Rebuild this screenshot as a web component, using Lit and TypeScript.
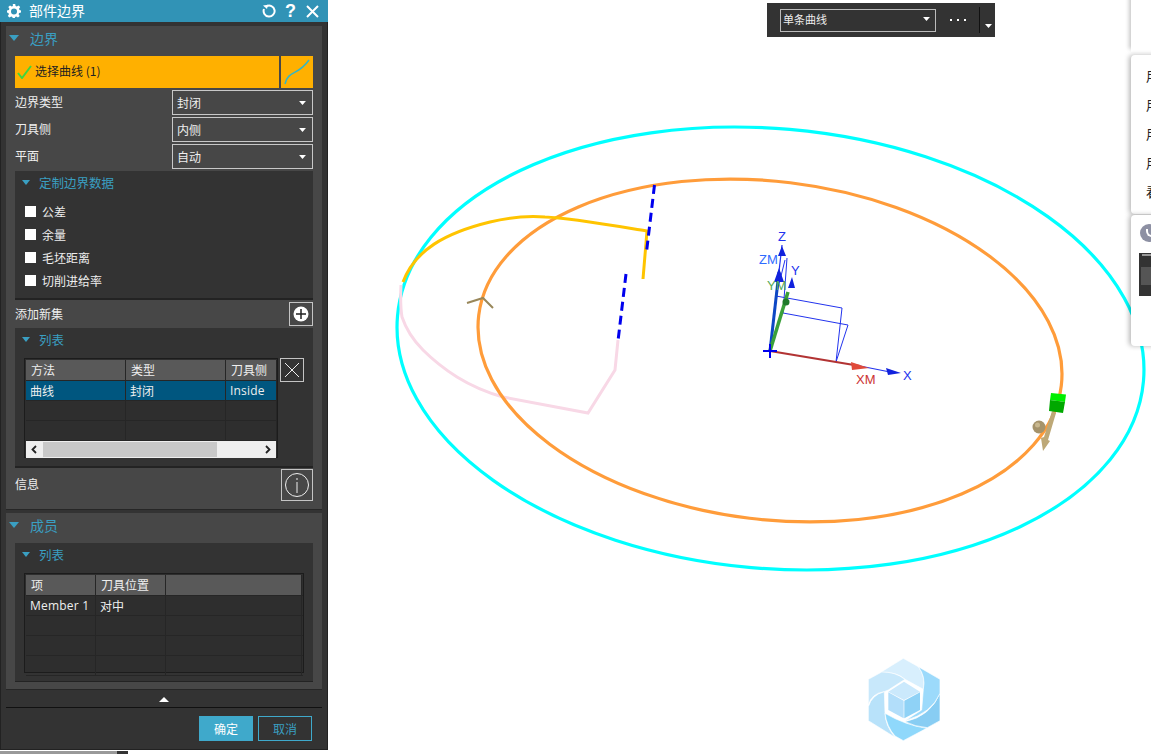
import { LitElement, html, css, svg } from "lit";
import { customElement } from "lit/decorators.js";

const caret = html`<svg class="caret" viewBox="0 0 12 7"><path d="M0 0H12L6 7Z" fill="#fff"/></svg>`;
const tri = (cls: string) => html`<span class=${"tri " + cls}></span>`;

const scene = svg`
  <ellipse cx="770.5" cy="348.5" rx="374.4" ry="219.9" transform="rotate(5 770.5 348.5)" fill="none" stroke="#00ffff" stroke-width="3.2"/>
  <path d="M401 285Q400 305 402 317Q408 335 423 350Q438 365 457 377Q478 390 503 397L588 413L615 370L618 340" fill="none" stroke="#f8d8e6" stroke-width="3"/>
  <ellipse cx="770" cy="350.5" rx="293.4" ry="169" transform="rotate(6.9 770 350.5)" fill="none" stroke="#ff9c3a" stroke-width="3.2"/>
  <path d="M403 282C415 250 445 233 490 222C510 217 530 216 545 217C570 218 610 225 647 231L643 279" fill="none" stroke="#ffc400" stroke-width="3"/>
  <path d="M654.500 185L646.500 252M626 274L618 341" fill="none" stroke="#0000ee" stroke-width="3" stroke-dasharray="9 5"/>
  <polyline points="467,303 483,298 493,308" fill="none" stroke="#99875a" stroke-width="2"/>
  <g fill="none" stroke="#2233ee" stroke-width="1">
    <path d="M776 296L842 308L836 362M783 313L848 325L836 362M785 260L776 296M787 258L783 313"/>
  </g>
  <path d="M770 351L782 245" stroke="#2233ee" stroke-width="1.200"/>
  <path d="M770 351L779 272" stroke="#0d47c4" stroke-width="3"/>
  <path d="M770 351L788 292" stroke="#3aa03a" stroke-width="3.500"/>
  <path d="M770 351L860 366" stroke="#b23333" stroke-width="2"/>
  <path d="M860 366L890 372" stroke="#2233ee" stroke-width="1.200"/>
  <path d="M782 246L778 256H786ZM779 268L774 282H784ZM792 277L788 288H795ZM901 373L886 368L888 375Z" fill="#1122dd"/>
  <path d="M869 368L851 362L852 370Z" fill="#e04a3a"/>
  <circle cx="786" cy="302" r="3.500" fill="#1f7a2a"/>
  <path d="M763 351H777M770 344V358" stroke="#0000ee" stroke-width="2"/>
  <g font-family="'Liberation Sans',sans-serif" font-size="13">
    <text x="778" y="241" fill="#2233ee">Z</text>
    <text x="759" y="264" fill="#2f6bff">ZM</text>
    <text x="791" y="275" fill="#2233ee">Y</text>
    <text x="767" y="290" fill="#55aa55">YM</text>
    <text x="856" y="384" fill="#cc3333">XM</text>
    <text x="903" y="380" fill="#2233ee">X</text>
  </g>
  <path d="M1052 411L1056 413L1048 440L1050 441L1043 451L1041 438L1044 437Z" fill="#bda877"/>
  <circle cx="1039" cy="427" r="6.500" fill="#a5936b"/>
  <circle cx="1037.500" cy="425" r="2.500" fill="#c9b88f"/>
  <path d="M1051 393L1066 394.500L1065 402L1050 400Z" fill="#00ee00"/>
  <path d="M1050 400L1065 402L1063 413L1049 411Z" fill="#00a800"/>
  <g transform="translate(850 650) scale(0.3333)" stroke="#fff" stroke-width="2">
    <path d="M95 65L160 25L205 50Q228 80 220 118L165 88Q140 65 95 68Z" fill="#d8effd"/>
    <path d="M55 88L95 66Q135 65 165 88L115 120L103 125Q65 130 55 165Z" fill="#c8e8fb"/>
    <path d="M55 170Q65 135 103 125L105 188Q105 225 135 262L55 212Z" fill="#b8e2fa"/>
    <path d="M105 190Q165 225 230 235L160 272L135 258Q110 230 105 190Z" fill="#8fd8fb"/>
    <path d="M165 215Q240 200 270 130V212L232 233Q195 230 165 215Z" fill="#88cdf3"/>
    <path d="M205 50L270 88V130Q245 190 165 212L215 180L220 118Q228 80 205 50Z" fill="#9cdafb"/>
    <path d="M115 125L162 95L210 125L162 150Z" fill="#cbe9fc" stroke="none"/>
    <path d="M115 127L161 152V205L115 180Z" fill="#b2defa" stroke="none"/>
    <path d="M163 152L210 127V180L163 205Z" fill="#8fd2f6" stroke="none"/>
  </g>
`;

@customElement("app-root")
export class AppRoot extends LitElement {
  static styles = css`
    :host {
      display: flex;
      width: 1151px;
      height: 754px;
      position: relative;
      overflow: hidden;
      background: #fff;
      font-family: "Noto Sans CJK SC", "Noto Sans", sans-serif;
      font-size: 12px;
      color: #eee;
      --accent: #3a9fc2;
    }
    .left { width: 328px; flex: none; display: flex; flex-direction: column; }
    .panel {
      height: 751px; box-sizing: border-box; background: #333;
      border-left: 1px solid #222; border-right: 1px solid #222; border-bottom: 1px solid #222;
      display: flex; flex-direction: column;
    }
    .strip { display: flex; height: 3px; width: 128px; margin-top: 1px; }
    .strip i { flex: 1; background: #999; }
    .strip b { width: 11px; background: #333; }
    .title {
      height: 22px; margin: 0 -1px; background: #3193b6; display: flex; align-items: center;
      padding: 0 9px 0 7px; color: #fff; font-size: 14px; flex: none;
    }
    .title .name { flex: 1; margin: -2px 0 0 8px; }
    .title svg { display: block; }
    .title .q { font: bold 18px "Liberation Sans", sans-serif; margin: 0 10px 0 9px; line-height: 22px; }
    .sec { background: #474747; margin: 4px 5px 0; padding: 0 9px; border-bottom: 1px solid #262626; }
    .sec.one { height: 484px; box-sizing: border-box; display: flex; flex-direction: column; }
    .sec.two { height: 177px; box-sizing: border-box; margin-top: 3px; }
    .head { display: flex; align-items: center; color: var(--accent); font-size: 14px; margin: 0 0 6px -6px; height: 24px; }
    .tri { width: 0; height: 0; border-style: solid; border-color: var(--accent) transparent transparent; }
    .tri.big { border-width: 6px 5px 0; margin-right: 11px; }
    .tri.small { border-width: 5px 4.500px 0; margin: 0 9px 0 7px; }
    .sel { display: flex; gap: 2px; height: 32px; flex: none; }
    .sel .a { flex: 1; background: #ffb000; color: #222; display: flex; align-items: center; padding-left: 2px; gap: 3px; }
    .sel .a span { margin-top: -3px; }
    .sel .b { width: 32px; background: #ffb000; }
    .row { display: flex; align-items: center; height: 25px; margin-top: 2px; flex: none; font-size: 12px; }
    .row .lbl { flex: 1; margin-top: -2px; }
    .dd {
      width: 141px; height: 25px; box-sizing: border-box; border: 1px solid #c8c8c8; display: flex;
      align-items: center; justify-content: space-between; padding: 0 6px 0 4px; background: #474747; flex: none;
    }
    .caret { width: 7px; height: 4px; display: block; }
    .group { background: #333; flex: none; }
    .g1 { height: 127px; margin-top: 2px; border-bottom: 2px solid #232323; }
    .subhead { display: flex; align-items: center; color: var(--accent); font-size: 12.500px; height: 22px; }
    .checks { display: flex; flex-direction: column; gap: 3px; padding: 8px 0 0 10px; }
    .check { display: flex; align-items: center; gap: 6px; height: 20px; }
    .box { width: 11px; height: 11px; background: #fff; }
    .addrow { display: flex; align-items: center; justify-content: space-between; height: 28px; flex: none; }
    .addrow > span { margin-top: -2px; }
    .iconbtn { box-sizing: border-box; border: 1px solid #c4c4c4; display: flex; align-items: center; justify-content: center; flex: none; }
    .add { width: 24px; height: 24px; }
    .g2 { height: 138px; border-bottom: 2px solid #232323; }
    .tablewrap { display: flex; gap: 2px; padding: 8px 0 0 9px; align-items: flex-start; }
    .tbl { border: 1px solid #1c1c1c; box-sizing: border-box; background: #2e2e2e; padding: 1px 0 1px 1px; flex: none; }
    .t1 { width: 254px; height: 100px; }
    .t2 { width: 280px; height: 100px; }
    .tr { display: grid; height: 20px; border-bottom: 1px solid #262626; box-sizing: border-box; }
    .t1 .tr { grid-template-columns: 100px 100px 51px; }
    .t2 .tr { grid-template-columns: 70px 70px 136px; }
    .tr > span { border-right: 1px solid #262626; display: flex; align-items: center; padding-left: 4px; white-space: nowrap; min-width: 0; line-height: 1; }
    .tr.hd { height: 21px; }
    .tr.hd > span { background: #595959; padding-left: 5px; }
    .tr.on > span { background: #00567f; }
    .latin { font-family: "Open Sans", "Noto Sans", sans-serif; letter-spacing: 0.200px; }
    .sb { height: 17px; background: #eee; display: flex; align-items: center; justify-content: space-between; padding: 0 5px; margin-right: 1px; position: relative; }
    .sb .thumb { position: absolute; left: 17px; width: 174px; top: 1px; bottom: 1px; background: #c8c8c8; }
    .sb svg { width: 6px; height: 9px; display: block; position: relative; }
    .del { width: 24px; height: 24px; }
    .inforow { display: flex; align-items: flex-start; justify-content: space-between; height: 41px; padding-top: 1px; box-sizing: border-box; flex: none; }
    .inforow > span { margin-top: 6px; }
    .info { width: 32px; height: 32px; }
    .g3 { height: 138px; border-bottom: 1px solid #232323; }
    .more { height: 17px; box-sizing: border-box; display: flex; align-items: center; justify-content: center; margin: 1px 5px 0; border-bottom: 1px solid #111; flex: none; }
    .more i { border-style: solid; border-width: 0 5px 5px; border-color: transparent transparent #fff; width: 0; height: 0; }
    .foot { display: flex; justify-content: flex-end; gap: 5px; padding: 8px 15px 0 0; }
    .btn { width: 54px; height: 25px; box-sizing: border-box; display: flex; align-items: center; justify-content: center; padding-bottom: 1px; }
    .ok { background: #3fa9cb; color: #fff; }
    .cancel { border: 1px solid #3fa9cb; color: #3a9fc2; }
    .canvas { flex: 1; position: relative; }
    .canvas > svg { position: absolute; left: 0; top: 0; width: 823px; height: 754px; }
    .tool {
      position: absolute; left: 439px; top: 3px; width: 228px; height: 34px; background: #333; box-sizing: border-box;
      display: flex; align-items: center; padding-left: 13px;
    }
    .tool .dd { width: 156px; height: 23px; background: #333; font-size: 11px; padding: 0 5px 2px 2px; border-color: #bbb; }
    .dots { display: flex; gap: 5px; width: 43px; justify-content: center; flex: none; }
    .dots i { width: 2px; height: 2px; background: #fff; }
    .tool .sep { width: 1px; height: 26px; background: #111; }
    .tool .mini { margin: 12px 0 0 5px; width: 7px; height: 4px; }
    .side { position: absolute; left: 803px; width: 30px; background: #fff; border-radius: 4px 0 0 4px; box-shadow: -2px 0 5px rgba(0, 0, 0, 0.28); overflow: hidden; color: #222; box-sizing: border-box; }
    .s1 { top: -6px; height: 58px; border-radius: 0; box-shadow: -2px -3px 4px rgba(0, 0, 0, 0.22); }
    .s2 { top: 55px; height: 159px; padding: 11px 0 0 15px; display: flex; flex-direction: column; gap: 9px; font-size: 13px; white-space: nowrap; }
    .s2 span { height: 20px; line-height: 20px; }
    .s3 { top: 215px; height: 131px; }
    .s3 .dot { position: absolute; left: 9px; top: 9px; width: 18px; height: 18px; border-radius: 50%; background: #8d90a3; }
    .s3 .dot::after { content: ""; position: absolute; left: 6px; top: 5px; width: 8px; height: 6px; border-left: 2px solid #fff; border-bottom: 2px solid #fff; border-radius: 0 0 0 6px; }
    .s3 .thumb { position: absolute; left: 8px; top: 38px; width: 22px; height: 43px; background: #333; }
    .s3 .thumb::before { content: ""; position: absolute; left: 3px; top: 1px; right: 0; height: 2px; background: #999; }
    .s3 .thumb::after { content: ""; position: absolute; left: 2px; top: 14px; width: 10px; height: 18px; background: #555; }
  `;

  private cell(items: unknown[], cls = "") {
    return html`<div class=${"tr " + cls}>${items.map((i) => html`<span>${i}</span>`)}</div>`;
  }

  render() {
    return html`
      <div class="left">
        <div class="panel">
          <div class="title">
            <svg width="14" height="14" viewBox="0 0 14 14"><path fill="#fff" fill-rule="evenodd" d="M5.800 0h2.400l.4 2 1.200.5L11.500 1.400l1.700 1.700L12 4.800l.5 1.200 1.500.4v2.200l-1.900.4-.5 1.200 1.100 1.700-1.700 1.700-1.700-1.100-1.200.5-.4 1.900H5.800l-.4-1.900-1.200-.5-1.700 1.100L.8 11.900 1.900 10.200l-.5-1.200L0 8.600V6.400l1.900-.4.500-1.200L1.300 3.100 3 1.400l1.700 1.100 1.200-.5zM7 4.400a3 3 0 1 0 0 6 3 3 0 0 0 0-6z"/></svg>
            <span class="name">部件边界</span>
            <svg width="14" height="14" viewBox="0 0 14 14"><path d="M4.500 2.200A5.500 5.500 0 1 1 2 5" fill="none" stroke="#fff" stroke-width="2"/><path d="M1 1.500L6 .8 5 5Z" fill="#fff"/></svg>
            <span class="q">?</span>
            <svg width="13" height="13" viewBox="0 0 13 13"><path d="M1 1L12 12M12 1L1 12" stroke="#fff" stroke-width="2"/></svg>
          </div>

          <div class="sec one">
            <div class="head">${tri("big")}边界</div>
            <div class="sel">
              <div class="a">
                <svg width="15" height="14" viewBox="0 0 15 14"><path d="M1 8L5 13L14 1" fill="none" stroke="#3ed63e" stroke-width="2"/></svg>
                <span>选择曲线 (1)</span>
              </div>
              <div class="b">
                <svg width="32" height="32" viewBox="0 0 32 32"><path d="M4 28C7 14 17 20 28 4" fill="none" stroke="#35b6c4" stroke-width="1.500"/></svg>
              </div>
            </div>
            <div class="row"><span class="lbl">边界类型</span><div class="dd"><span>封闭</span>${caret}</div></div>
            <div class="row"><span class="lbl">刀具侧</span><div class="dd"><span>内侧</span>${caret}</div></div>
            <div class="row"><span class="lbl">平面</span><div class="dd"><span>自动</span>${caret}</div></div>

            <div class="group g1">
              <div class="subhead">${tri("small")}定制边界数据</div>
              <div class="checks">
                ${["公差", "余量", "毛坯距离", "切削进给率"].map((t) => html`<div class="check"><span class="box"></span><span>${t}</span></div>`)}
              </div>
            </div>

            <div class="addrow">
              <span>添加新集</span>
              <div class="iconbtn add">
                <svg width="16" height="16" viewBox="0 0 16 16"><circle cx="8" cy="8" r="7.500" fill="#fff"/><path d="M3 8H13M8 3V13" stroke="#222" stroke-width="1.500"/></svg>
              </div>
            </div>

            <div class="group g2">
              <div class="subhead">${tri("small")}列表</div>
              <div class="tablewrap">
                <div class="tbl t1">
                  ${this.cell(["方法", "类型", "刀具侧"], "hd")}
                  ${this.cell(["曲线", "封闭", html`<span class="latin">Inside</span>`], "on")}
                  ${this.cell(["", "", ""])}
                  ${this.cell(["", "", ""])}
                  <div class="sb">
                    <div class="thumb"></div>
                    <svg viewBox="0 0 6 9"><path d="M5 1L1.500 4.500L5 8" fill="none" stroke="#222" stroke-width="1.800"/></svg>
                    <svg viewBox="0 0 6 9"><path d="M1 1L4.500 4.500L1 8" fill="none" stroke="#222" stroke-width="1.800"/></svg>
                  </div>
                </div>
                <div class="iconbtn del">
                  <svg width="18" height="18" viewBox="0 0 18 18"><path d="M2 2L16 16M16 2L2 16" stroke="#eee" stroke-width="1"/></svg>
                </div>
              </div>
            </div>

            <div class="inforow">
              <span>信息</span>
              <div class="iconbtn info">
                <svg width="26" height="26" viewBox="0 0 26 26"><circle cx="13" cy="13" r="11.500" fill="none" stroke="#eee" stroke-width="1"/><path d="M13 10V21M13 6V8" stroke="#eee" stroke-width="1"/></svg>
              </div>
            </div>
          </div>

          <div class="sec two">
            <div class="head">${tri("big")}成员</div>
            <div class="group g3">
              <div class="subhead">${tri("small")}列表</div>
              <div class="tablewrap">
                <div class="tbl t2">
                  ${this.cell(["项", "刀具位置", ""], "hd")}
                  ${this.cell([html`<span class="latin">Member 1</span>`, "对中", ""])}
                  ${this.cell(["", "", ""])}
                  ${this.cell(["", "", ""])}
                  ${this.cell(["", "", ""])}
                </div>
              </div>
            </div>
          </div>

          <div class="more"><i></i></div>
          <div class="foot">
            <div class="btn ok">确定</div>
            <div class="btn cancel">取消</div>
          </div>
        </div>
        <div class="strip"><i></i><b></b></div>
      </div>

      <div class="canvas">
        <svg viewBox="328 0 823 754">${scene}</svg>
        <div class="tool">
          <div class="dd"><span>单条曲线</span>${caret}</div>
          <span class="dots"><i></i><i></i><i></i></span>
          <span class="sep"></span>
          <svg class="mini" viewBox="0 0 7 4"><path d="M0 0H7L3.500 4Z" fill="#fff"/></svg>
        </div>
        <div class="side s1"></div>
        <div class="side s2"><span>用户</span><span>用户</span><span>用户</span><span>用户</span><span>看到</span></div>
        <div class="side s3"><div class="dot"></div><div class="thumb"></div></div>
      </div>
    `;
  }
}
